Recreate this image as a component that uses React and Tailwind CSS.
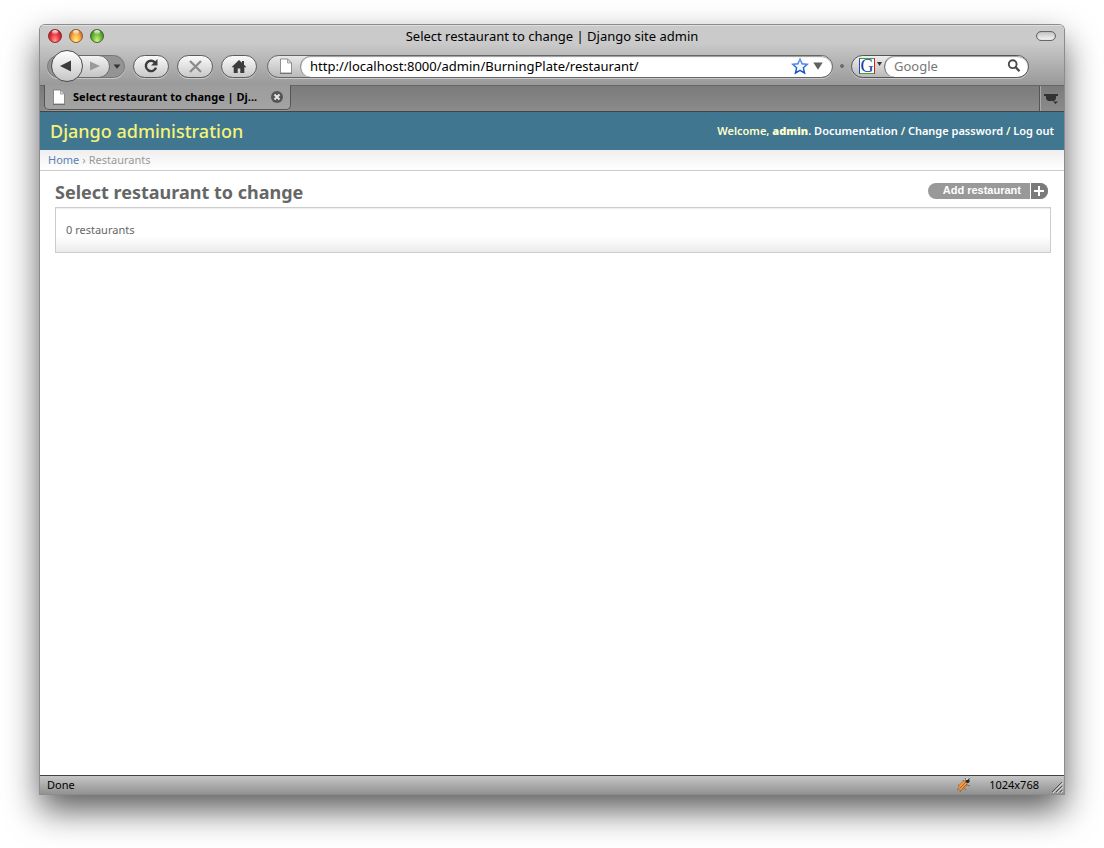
import React from "react";

const pill =
  "flex h-[23px] w-9 items-center justify-center rounded-full border border-[#5c5c5c] bg-linear-to-b from-[#fafafa] to-[#c9c9c9] shadow-[0_1px_0_#c8c8c8]";

function Light({ label, color }) {
  return (
    <button aria-label={label} className={`relative size-[14px] overflow-hidden rounded-full border ${color}`}>
      <span className="absolute inset-x-[3px] top-0 h-[4px] rounded-full bg-linear-to-b from-white/95 to-white/25" />
    </button>
  );
}

function PageIcon() {
  return (
    <svg width="14" height="16" viewBox="0 0 14 16" aria-hidden="true">
      <path d="M1.5 1h7l4 4v10h-11z" fill="#fff" stroke="#777" strokeWidth=".8" />
      <path d="M8.5 1v4h4z" fill="#ddd" stroke="#888" strokeWidth=".7" />
      <path d="M1 15.5h12" stroke="#666" strokeWidth=".8" />
    </svg>
  );
}

function TitleBar() {
  return (
    <div className="flex h-[22px] items-center px-2">
      <div className="flex flex-1 gap-[7px]">
        <Light label="Close window" color="border-[#862c2c] bg-radial-[at_50%_90%] from-[#ff9d94] via-[#ef3340] to-[#8e1820]" />
        <Light label="Minimize window" color="border-[#8e5a26] bg-radial-[at_50%_90%] from-[#fff37c] via-[#f8a948] to-[#a64c16]" />
        <Light label="Zoom window" color="border-[#416629] bg-radial-[at_50%_90%] from-[#cdf58c] via-[#70ba3b] to-[#2f6c20]" />
      </div>
      <div className="pt-px text-[13px] text-black">Select restaurant to change | Django site admin</div>
      <div className="flex flex-1 justify-end">
        <button aria-label="Toggle toolbar" className="h-[10px] w-5 rounded-full border border-[#666] bg-linear-to-b from-[#c4c4c4] to-[#f5f5f5] shadow-[inset_0_0_1px_#777]" />
      </div>
    </div>
  );
}

function Toolbar() {
  return (
    <div className="flex h-[38px] items-center pr-[35px] pl-[7px]">
      <div className="flex h-[23px] w-[78px] items-center rounded-full border border-[#777] bg-[#949494] shadow-[0_1px_0_#c4c4c4]">
        <button aria-label="Back" className="z-10 ml-[3px] flex size-8 shrink-0 items-center justify-center rounded-full border border-[#4c4c4c] bg-linear-to-b from-white to-[#c6c6c6] pr-[2px]">
          <svg width="12" height="12" viewBox="0 0 12 12"><path d="M0 6 11 .5v11z" fill="#3c3c3c" /></svg>
        </button>
        <button aria-label="Forward" className="-ml-2 flex h-[23px] w-[35px] shrink-0 items-center justify-center rounded-r-full border border-[#6a6a6a] bg-linear-to-b from-[#f2f2f2] to-[#c4c4c4] pl-1">
          <svg width="10" height="10" viewBox="0 0 10 10"><path d="M10 5 0 .5v9z" fill="#999" /></svg>
        </button>
        <button aria-label="Recent pages" className="flex flex-1 justify-center">
          <svg width="8" height="5" viewBox="0 0 8 5"><path d="M.5.5h7L4 4.7z" fill="#333" /></svg>
        </button>
      </div>
      <div className="ml-2 flex gap-2">
        <button aria-label="Reload" className={pill}>
          <svg width="16" height="16" viewBox="0 0 16 16">
            <path d="M12.3 4.9A5.2 5.2 0 1 0 13 9.6" fill="none" stroke="#3c3c3c" strokeWidth="2.4" />
            <path d="M14.5 1v6.6H8z" fill="#3c3c3c" />
          </svg>
        </button>
        <button aria-label="Stop" className={pill}>
          <svg width="13" height="13" viewBox="0 0 13 13"><path d="m1 1 11 11M12 1 1 12" stroke="#8b8b8b" strokeWidth="2.3" /></svg>
        </button>
        <button aria-label="Home" className={pill}>
          <svg width="16" height="15" viewBox="0 0 16 15"><path d="M8 1 .5 8.2h2.2V14h4V9.5h2.6V14h4V8.2h2.2L13 5.7V2h-2v1.8z" fill="#3c3c3c" /></svg>
        </button>
      </div>
      <div className="ml-[10px] flex h-[23px] flex-1 overflow-hidden rounded-full border border-[#666] bg-linear-to-b from-[#e8e8e8] to-[#b9b9b9] shadow-[0_1px_0_#c8c8c8]">
        <button aria-label="Site identity" className="flex w-8 items-center justify-center pl-1"><PageIcon /></button>
        <div className="flex flex-1 items-center rounded-full border-l border-[#888] bg-white pr-[9px] pl-[9px] shadow-[inset_0_1px_1px_#999]">
          <input aria-label="Address" defaultValue="http://localhost:8000/admin/BurningPlate/restaurant/" className="min-w-0 flex-1 bg-transparent pt-px text-[13px] text-black outline-none" />
          <button aria-label="Bookmark this page">
            <svg width="18" height="18" viewBox="0 0 18 18">
              <defs>
                <linearGradient id="star" x1="0" y1="0" x2="0" y2="1"><stop stopColor="#5d9df2" /><stop offset="1" stopColor="#164ac0" /></linearGradient>
              </defs>
              <path d="m9 2 2.1 4.8 5.2.5-3.9 3.5 1.1 5.2L9 13.3 4.5 16l1.1-5.2-3.9-3.5 5.2-.5z" fill="#f3f8ff" stroke="url(#star)" strokeWidth="1.5" />
            </svg>
          </button>
          <button aria-label="Show history" className="ml-1">
            <svg width="10" height="8" viewBox="0 0 10 8"><path d="M.3.5h9.4L5 7.7z" fill="#606060" /></svg>
          </button>
        </div>
      </div>
      <span className="mx-[7px] size-1 rounded-full border border-[#666] bg-[#777]" />
      <form role="search" className="flex h-[23px] w-[178px] overflow-hidden rounded-full border border-[#555] bg-linear-to-b from-[#eee] to-[#b9b9b9] shadow-[0_1px_0_#c8c8c8]">
        <button type="button" aria-label="Choose search engine" className="flex w-8 items-center gap-[2px] pl-[7px]">
          <span className="flex size-4 shrink-0 items-center justify-center border border-t-[#37a92d] border-r-[#d21c14] border-b-[#37a92d] border-l-[#2748b5] bg-white font-['Liberation_Serif',serif] text-[18px] leading-4 text-[#1b3ba5]">G</span>
          <svg width="5" height="4" viewBox="0 0 5 4" className="mb-1 shrink-0"><path d="M0 0h5L2.5 4z" fill="#333" /></svg>
        </button>
        <div className="flex min-w-0 flex-1 items-center rounded-full border-l border-[#666] bg-white pr-[7px] pl-[9px] shadow-[inset_0_1px_1px_#999]">
          <input aria-label="Search" placeholder="Google" className="min-w-0 flex-1 bg-transparent pt-px text-[13px] outline-none placeholder:text-[#777]" />
          <button aria-label="Search the web">
            <svg width="14" height="14" viewBox="0 0 14 14"><circle cx="5.7" cy="5.2" r="3.9" fill="none" stroke="#4b4b4b" strokeWidth="1.9" /><path d="m8.5 8 4 4.3" stroke="#4b4b4b" strokeWidth="2.3" /></svg>
          </button>
        </div>
      </form>
    </div>
  );
}

function TabStrip() {
  return (
    <div className="flex h-[27px] items-start border-t border-b border-t-[#666] border-b-[#444] bg-linear-to-b from-[#7b7b7b] to-[#8b8b8b] pl-1">
      <div className="-mt-px flex h-[25px] w-[247px] items-center rounded-b-[5px] border border-t-0 border-[#555] bg-linear-to-b from-[#9d9d9d] to-[#a3a3a3] px-[7px] shadow-[0_1px_0_#999]">
        <PageIcon />
        <span className="ml-[7px] min-w-0 flex-1 truncate pt-px text-[11px] font-bold text-black">Select restaurant to change | Dj...</span>
        <button aria-label="Close tab">
          <svg width="12" height="12" viewBox="0 0 12 12"><circle cx="6" cy="6" r="6" fill="#555" /><path d="m3.5 3.5 5 5m0-5-5 5" stroke="#e8e8e8" strokeWidth="2" /></svg>
        </button>
      </div>
      <button aria-label="List all tabs" className="ml-auto flex h-full w-[25px] items-center justify-center border-l border-[#555] pr-px shadow-[inset_1px_0_0_#aaa]">
        <svg width="15" height="12" viewBox="0 0 15 12"><path d="M0 1h14v2h-2v3l-2 2H4L2 6V3H0zM9 8.5h5L11.5 11z" fill="#333" /></svg>
      </button>
    </div>
  );
}

function AdminPage() {
  return (
    <main className="flex-1 bg-white">
      <header className="flex h-[38px] items-center justify-between bg-[#417690] px-[10px]">
        <h1 className="text-[18px] font-medium text-[#f4f379]">Django administration</h1>
        <nav className="pt-px text-[11px] font-semibold text-[#ffffcc]">
          Welcome, <strong>admin</strong>. <a href="#docs" className="text-white">Documentation</a> / <a href="#password" className="text-white">Change password</a> / <a href="#logout" className="text-white">Log out</a>
        </nav>
      </header>
      <nav aria-label="Breadcrumbs" className="flex h-[21px] items-center gap-[3px] border-b border-[#ccc] bg-linear-to-b from-[#eee] to-white px-2 text-[11px] text-[#999]">
        <a href="#home" className="text-[#5b80b2]">Home</a><span>›</span><span>Restaurants</span>
      </nav>
      <section className="pt-[10px] pr-[13px] pl-[15px]">
        <div className="flex h-[26px] items-start justify-between pr-[3px]">
          <h2 className="text-[18px] leading-[22px] font-bold text-[#666]">Select restaurant to change</h2>
          <a href="#add" className="mt-[2px] flex h-4 overflow-hidden rounded-full bg-[#999] font-['Liberation_Sans',Arial,sans-serif] text-[11px] leading-[14px] font-bold text-white">
            <span className="pr-[9px] pl-[15px]">Add restaurant</span>
            <span className="flex w-[18px] items-center justify-center border-l border-white bg-[#7b7b7b]">
              <svg width="11" height="10" viewBox="0 0 11 10" aria-hidden="true"><path d="M5 0v10M0 5h10" stroke="#fff" strokeWidth="2" /></svg>
            </span>
          </a>
        </div>
        <div className="flex h-[46px] items-center border border-[#ccc] bg-linear-to-t from-[#ebebeb] to-white to-35% px-[10px] text-[11px] text-[#666] shadow-[inset_0_1px_0_#eee]">
          0 restaurants
        </div>
      </section>
    </main>
  );
}

function StatusBar() {
  return (
    <footer className="flex h-[19px] items-center border-t border-[#444] bg-linear-to-b from-[#c6c6c6] to-[#929292] pl-[7px] text-[11px] text-black">
      <span className="flex-1">Done</span>
      <button aria-label="Firebug">
        <svg width="18" height="16" viewBox="0 0 18 16">
          <path d="m3 8 3 1M2 13l3-2M5 15l1-2M8 3l1 3M15 9l-3-1M11 13l-2-2M11 3l-1-2M13 3l2-2" stroke="#6b5b4c" strokeWidth=".8" />
          <ellipse cx="7.8" cy="8.6" rx="3" ry="5.8" transform="rotate(43 7.8 8.6)" fill="#ee9848" stroke="#b46a30" strokeWidth=".6" />
          <path d="m4.5 11.5 6.5-6.5M6.5 12.5 12 7" stroke="#9a4a18" strokeWidth=".7" />
          <circle cx="12.6" cy="4" r="2.1" fill="#292929" />
          <path d="m11 2.5 2-.5" stroke="#fff" />
        </svg>
      </button>
      <span className="ml-4">1024x768</span>
      <svg width="13" height="14" viewBox="0 0 13 14" className="ml-3 self-end" aria-hidden="true">
        <path d="M1 12 11 2M5 12l6-6M9 12l2-2" stroke="#555" />
        <path d="M2 13 12 3M6 13l6-6M10 13l2-2" stroke="#ddd" />
      </svg>
    </footer>
  );
}

export default function App() {
  return (
    <div className="flex min-h-screen flex-col bg-white px-10 pt-[25px] pb-[54px] font-['Noto_Sans',sans-serif]">
      <div className="flex flex-1 flex-col overflow-hidden rounded-t-[5px] bg-white shadow-[0_0_0_1px_#8c8c8c,0_16px_34px_rgba(0,0,0,0.65)]">
        <div className="bg-linear-to-b from-[#cacaca] from-30% to-[#999] shadow-[inset_0_1px_0_#e0e0e0]">
          <TitleBar />
          <Toolbar />
        </div>
        <TabStrip />
        <AdminPage />
        <StatusBar />
      </div>
    </div>
  );
}
